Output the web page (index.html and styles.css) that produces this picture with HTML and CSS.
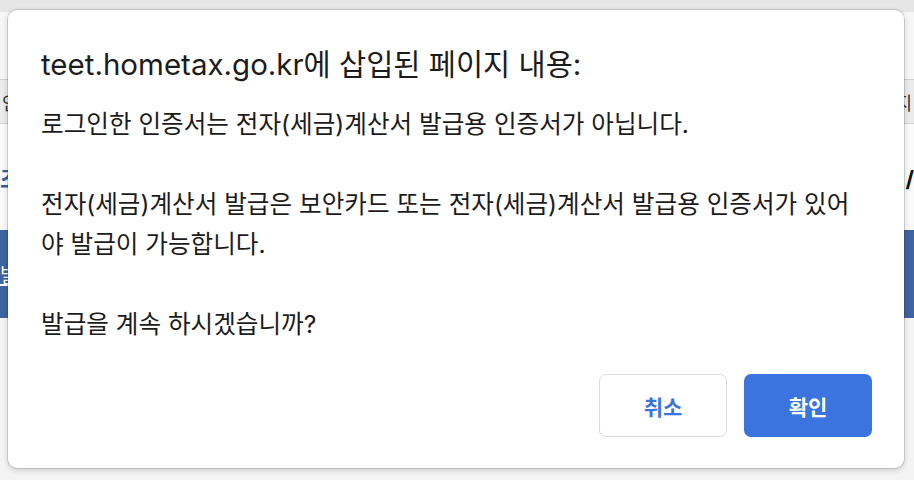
FILE: index.html
```html
<!DOCTYPE html>
<html lang="ko">

<head>
    <meta charset="UTF-8">
    <meta name="viewport" content="width=device-width, initial-scale=1.0">
    <title>홈택스</title>
    <link rel="stylesheet" href="styles.css">
</head>

<body>
    <div class="page">
        <div class="topbar"></div>
        <div class="toolbar"></div>
        <div class="tabs">
            <span>인</span>
            <span>지</span>
        </div>
        <div class="heading">
            <span class="blue">조</span>
            <span class="black">세/</span>
        </div>
        <div class="band">
            <span>발</span>
        </div>
        <div class="rest"></div>
    </div>

    <div class="dialog">
        <h1>teet.hometax.go.kr에 삽입된 페이지 내용:</h1>
        <div class="msg">
            <p>로그인한 인증서는 전자(세금)계산서 발급용 인증서가 아닙니다.</p>
            <p>전자(세금)계산서 발급은 보안카드 또는 전자(세금)계산서 발급용 인증서가 있어<br>야 발급이 가능합니다.</p>
            <p>발급을 계속 하시겠습니까?</p>
        </div>
        <div class="btns">
            <button class="btn-cancel" type="button">취소</button>
            <button class="btn-ok" type="button">확인</button>
        </div>
    </div>
</body>

</html>
```

FILE: styles.css
```css
* {
    box-sizing: border-box;
}

body {
    margin: 0;
    width: 914px;
    height: 480px;
    overflow: hidden;
    font-family: Inter, "Noto Sans CJK KR", sans-serif;
    background-color: #f4f4f4;
}

.page {
    display: flex;
    flex-direction: column;
    height: 480px;

    .topbar {
        height: 12px;
        background-color: #e6e6e6;
    }

    .toolbar {
        height: 68px;
        background-color: #f7f7f7;
        border-bottom: 1px solid #cfcfcf;
    }

    .tabs {
        height: 44px;
        display: flex;
        justify-content: space-between;
        align-items: center;
        background-color: #ebebeb;
        border-bottom: 1px solid #d3d3d3;
        font-size: 18px;
        color: #333;
        padding: 0 2px;
    }

    .heading {
        height: 106px;
        display: flex;
        justify-content: space-between;
        align-items: center;
        background-color: #fafafa;
        font-size: 22px;
        font-weight: 700;

        .blue {
            color: #2d63a8;
        }

        .black {
            color: #111;
        }
    }

    .band {
        height: 88px;
        display: flex;
        align-items: center;
        background-color: #3f64a0;
        color: #fff;
        font-size: 20px;
        text-decoration: underline;
    }

    .rest {
        flex: 1;
        background-color: #f4f4f4;
    }
}

.dialog {
    position: absolute;
    left: 8px;
    top: 10px;
    width: 896px;
    height: 458px;
    background-color: #fff;
    border-radius: 9px;
    box-shadow: 0 0 0 1px rgba(0, 0, 0, 0.12), 0 2px 6px rgba(0, 0, 0, 0.18);
    padding: 36px 32px 31px 33px;
    display: flex;
    flex-direction: column;
    color: #1c1c1c;

    & h1 {
        margin: 0;
        font-size: 29.5px;
        font-weight: 400;
        line-height: 36px;
        color: #1c1c1c;
        white-space: nowrap;
    }

    .msg {
        flex: 1;
        min-height: 0;
        margin-top: 22px;

        & p {
            margin: 0 0 40px;
            font-size: 24.6px;
            line-height: 40px;
            white-space: nowrap;
        }

        & p:last-child {
            margin-bottom: 0;
        }
    }

    .btns {
        display: flex;
        justify-content: flex-end;
        gap: 17px;

        & button {
            width: 128px;
            height: 63px;
            border-radius: 7px;
            font-family: Inter, "Noto Sans CJK KR", sans-serif;
            font-size: 21px;
            font-weight: 700;
        }

        .btn-cancel {
            background-color: #fff;
            border: 1px solid #dadce0;
            color: #3b73dc;
        }

        .btn-ok {
            background-color: #3b74de;
            border: none;
            color: #fff;
        }
    }
}
```
